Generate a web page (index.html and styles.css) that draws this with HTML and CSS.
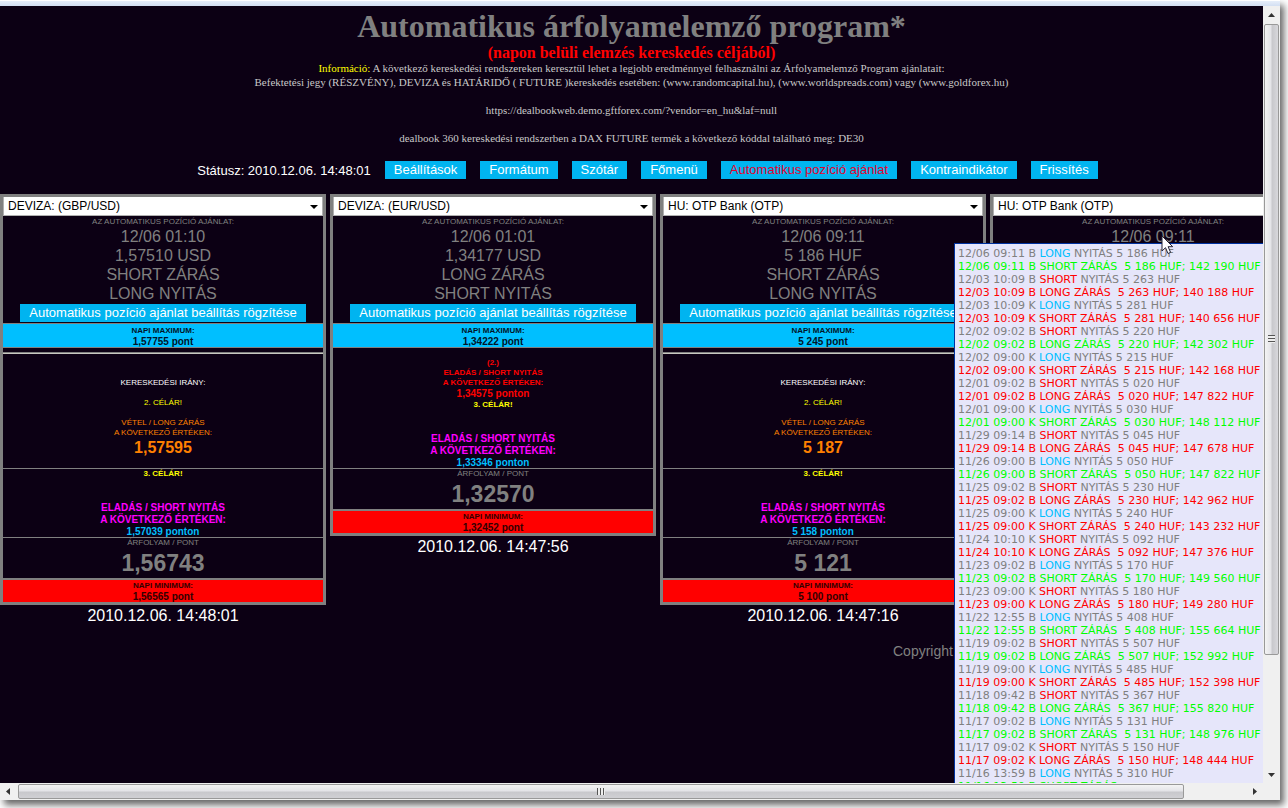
FILE: index.html
```html
<!DOCTYPE html>
<html lang="hu">
<head>
<meta charset="utf-8">
<title>Automatikus árfolyamelemző program</title>
<link rel="stylesheet" href="styles.css">
</head>
<body>
<div class="window">
  <div class="topstrip"></div>
  <div class="middle">
    <div class="viewport">
      <header class="header">
        <h1 class="title">Automatikus árfolyamelemző program*</h1>
        <p class="subtitle">(napon belüli elemzés kereskedés céljából)</p>
        <p class="info"><span class="yellow">Információ:</span> A következő kereskedési rendszereken keresztül lehet a legjobb eredménnyel felhasználni az Árfolyamelemző Program ajánlatait:<br>
        Befektetési jegy (RÉSZVÉNY), DEVIZA és HATÁRIDŐ ( FUTURE )kereskedés esetében: (www.randomcapital.hu), (www.worldspreads.com) vagy (www.goldforex.hu)<br><br>
        https://dealbookweb.demo.gftforex.com/?vendor=en_hu&amp;laf=null<br><br>
        dealbook 360 kereskedési rendszerben a DAX FUTURE termék a következő kóddal található meg: DE30</p>
      </header>
      <nav class="nav">
        <span class="status">Státusz: 2010.12.06. 14:48:01</span>
        <button class="btn">Beállítások</button>
        <button class="btn">Formátum</button>
        <button class="btn">Szótár</button>
        <button class="btn">Főmenü</button>
        <button class="btn btn-active">Automatikus pozíció ajánlat</button>
        <button class="btn">Kontraindikátor</button>
        <button class="btn">Frissítés</button>
      </nav>
      <main class="cards">
        <div class="column">
          <section class="card">
            <div class="picker"><select class="select" aria-label="DEVIZA: (GBP/USD)"><option>DEVIZA: (GBP/USD)</option></select><svg class="caret" width="8" height="4" viewBox="0 0 8 4"><path d="M0 0h8L4 4z"/></svg></div>
            <div class="offer">
              <p class="tiny">AZ AUTOMATIKUS POZÍCIÓ AJÁNLAT:</p>
              <p class="line">12/06 01:10</p><p class="line">1,57510 USD</p><p class="line">SHORT ZÁRÁS</p><p class="line">LONG NYITÁS</p>
              <button class="btn">Automatikus pozíció ajánlat beállítás rögzítése</button>
            </div>
            <div class="band max"><p>NAPI MAXIMUM:</p><p class="points">1,57755 pont</p></div>
            <hr class="rule">
            <div class="direction">
              <p class="white">KERESKEDÉSI IRÁNY:</p>
              <p class="yellow">2. CÉLÁR!</p>
              <div class="orange"><p>VÉTEL / LONG ZÁRÁS</p><p>A KÖVETKEZŐ ÉRTÉKEN:</p><p class="price">1,57595</p></div>
            </div>
            <div class="target"><p class="goal">3. CÉLÁR!</p><div class="sell"><p>ELADÁS / SHORT NYITÁS</p><p>A KÖVETKEZŐ ÉRTÉKEN:</p><p class="blue">1,57039 ponton</p></div></div>
            <div class="rate"><p>ÁRFOLYAM / PONT</p><p class="big">1,56743</p></div>
            <div class="band min"><p>NAPI MINIMUM:</p><p class="points">1,56565 pont</p></div>
          </section>
          <p class="stamp">2010.12.06. 14:48:01</p>
        </div>
        <div class="column">
          <section class="card">
            <div class="picker"><select class="select" aria-label="DEVIZA: (EUR/USD)"><option>DEVIZA: (EUR/USD)</option></select><svg class="caret" width="8" height="4" viewBox="0 0 8 4"><path d="M0 0h8L4 4z"/></svg></div>
            <div class="offer">
              <p class="tiny">AZ AUTOMATIKUS POZÍCIÓ AJÁNLAT:</p>
              <p class="line">12/06 01:01</p><p class="line">1,34177 USD</p><p class="line">LONG ZÁRÁS</p><p class="line">SHORT NYITÁS</p>
              <button class="btn">Automatikus pozíció ajánlat beállítás rögzítése</button>
            </div>
            <div class="band max"><p>NAPI MAXIMUM:</p><p class="points">1,34222 pont</p></div>
            <div class="second"><p>(2.)</p><p>ELADÁS / SHORT NYITÁS</p><p>A KÖVETKEZŐ ÉRTÉKEN:</p><p class="points">1,34575 ponton</p></div>
            <div class="target target-plain"><p class="goal">3. CÉLÁR!</p><div class="sell"><p>ELADÁS / SHORT NYITÁS</p><p>A KÖVETKEZŐ ÉRTÉKEN:</p><p class="blue">1,33346 ponton</p></div></div>
            <div class="rate"><p>ÁRFOLYAM / PONT</p><p class="big">1,32570</p></div>
            <div class="band min"><p>NAPI MINIMUM:</p><p class="points">1,32452 pont</p></div>
          </section>
          <p class="stamp">2010.12.06. 14:47:56</p>
        </div>
        <div class="column">
          <section class="card">
            <div class="picker"><select class="select" aria-label="HU: OTP Bank (OTP)"><option>HU: OTP Bank (OTP)</option></select><svg class="caret" width="8" height="4" viewBox="0 0 8 4"><path d="M0 0h8L4 4z"/></svg></div>
            <div class="offer">
              <p class="tiny">AZ AUTOMATIKUS POZÍCIÓ AJÁNLAT:</p>
              <p class="line">12/06 09:11</p><p class="line">5 186 HUF</p><p class="line">SHORT ZÁRÁS</p><p class="line">LONG NYITÁS</p>
              <button class="btn">Automatikus pozíció ajánlat beállítás rögzítése</button>
            </div>
            <div class="band max"><p>NAPI MAXIMUM:</p><p class="points">5 245 pont</p></div>
            <hr class="rule">
            <div class="direction">
              <p class="white">KERESKEDÉSI IRÁNY:</p>
              <p class="yellow">2. CÉLÁR!</p>
              <div class="orange"><p>VÉTEL / LONG ZÁRÁS</p><p>A KÖVETKEZŐ ÉRTÉKEN:</p><p class="price">5 187</p></div>
            </div>
            <div class="target"><p class="goal">3. CÉLÁR!</p><div class="sell"><p>ELADÁS / SHORT NYITÁS</p><p>A KÖVETKEZŐ ÉRTÉKEN:</p><p class="blue">5 158 ponton</p></div></div>
            <div class="rate"><p>ÁRFOLYAM / PONT</p><p class="big">5 121</p></div>
            <div class="band min"><p>NAPI MINIMUM:</p><p class="points">5 100 pont</p></div>
          </section>
          <p class="stamp">2010.12.06. 14:47:16</p>
        </div>
        <div class="column">
          <section class="card">
            <div class="picker"><select class="select" aria-label="HU: OTP Bank (OTP)"><option>HU: OTP Bank (OTP)</option></select></div>
            <div class="offer">
              <p class="tiny">AZ AUTOMATIKUS POZÍCIÓ AJÁNLAT:</p>
              <p class="line">12/06 09:11</p>
            </div>
          </section>
        </div>
      </main>
      <footer class="footer">Copyright I</footer>
      <div class="popup" id="popup"></div>
      <svg class="pointer" width="13" height="20" viewBox="0 0 13 20"><path d="M1 1v15l3.500-3.300 2.500 5.800 2.600-1.100-2.500-5.700h4.600z" fill="#fff" stroke="#223" stroke-width="1"/></svg>
    </div>
    <div class="vbar">
      <svg class="arrow" width="7" height="4" viewBox="0 0 7 4"><path d="M0 4h7L3.500 0z"/></svg>
      <div class="vtrack"><div class="vthumb"><span class="vgrip"></span></div></div>
      <svg class="arrow" width="7" height="4" viewBox="0 0 7 4"><path d="M0 0h7L3.500 4z"/></svg>
    </div>
  </div>
  <div class="hbar">
    <svg class="arrow" width="4" height="7" viewBox="0 0 4 7"><path d="M4 0v7L0 3.500z"/></svg>
    <div class="htrack"><div class="hthumb"><span class="hgrip"></span></div></div>
    <svg class="arrow" width="4" height="7" viewBox="0 0 4 7"><path d="M0 0v7l4-3.500z"/></svg>
  </div>
</div>
<script src="script.js"></script>
</body>
</html>
```
FILE: styles.css
```css
* { box-sizing: border-box; }
body {
  margin: 0;
  height: 100vh;
  padding: 0 8px 8px 0;
  background: #fff;
  font-family: "Liberation Sans", Arial, sans-serif;
  overflow: hidden;
}
p, h1 { margin: 0; }
.window {
  height: 100%;
  display: flex;
  flex-direction: column;
  box-shadow: 4px 5px 7px rgba(0, 0, 0, .6);
}
.topstrip { height: 6px; flex: none; background: linear-gradient(#fff 0 1px, #e6eefa 1px, #d3dff2); }
.middle { flex: 1; min-height: 0; display: flex; }
.viewport {
  flex: 1;
  min-width: 0;
  position: relative;
  overflow: hidden;
  background: #0c0014;
  color: #808080;
}
.header { padding-top: 2px; text-align: center; font-family: "Liberation Serif", "Times New Roman", serif; }
.title { font-size: 32px; line-height: 36px; }
.subtitle { font-size: 16px; font-weight: bold; line-height: 17px; color: #f00; }
.info { font-size: 11px; line-height: 14px; color: #c8c8c8; }
.yellow { color: #ff0; }
.white { color: #fff; }
.blue { color: #00bfff; }
.nav { display: flex; justify-content: center; align-items: center; gap: 14px; padding: 16px 0 15px 32px; }
.status { color: #fff; font-size: 13px; }
.btn {
  height: 18px;
  border: 0;
  padding: 0 9px;
  background: #00b4f0;
  color: #fff;
  font: 13px/18px "Liberation Sans", Arial, sans-serif;
  white-space: nowrap;
}
.btn-active { color: #e6002d; }
.cards { display: flex; align-items: flex-start; gap: 4px; }
.column { flex: none; width: 326px; text-align: center; }
.card { border: 3px solid #808080; font-size: 8px; line-height: 10px; }
.picker { display: grid; align-items: center; background: #fff; }
.picker > * { grid-area: 1 / 1; }
.select {
  appearance: none;
  width: 100%;
  height: 19px;
  padding: 0 4px;
  border: 1px solid #b0b0b0;
  border-top: 0;
  border-radius: 0;
  background: #fff;
  color: #000;
  font: 12px "Liberation Sans", Arial, sans-serif;
}
.caret { justify-self: end; margin-right: 5px; pointer-events: none; }
.offer { padding-bottom: 1px; }
.tiny { line-height: 11px; }
.line { font-size: 16px; line-height: 19px; }
.offer .btn { display: block; margin: 1px auto 0; }
.band { font-weight: bold; line-height: 11px; }
.max { padding-top: 1px; background: #00bfff; color: #001428; border: solid #808080; border-width: 1px 0; }
.min { background: #f00; color: #300; border-top: 2px solid #808080; }
.points { font-size: 10px; line-height: 11px; }
.rule { margin: 4px 0 0; border: solid; border-width: 1px 0; border-color: #808080 #000 #c8c8c0; }
.direction { display: grid; gap: 10px; padding: 24px 0 10px; }
.orange { color: #ff8000; }
.price { font-size: 16px; font-weight: bold; line-height: 20px; }
.second { padding: 10px 0 1px; color: #f00; font-weight: bold; }
.target { border-top: 1px solid #808080; font-weight: bold; }
.target-plain { border-top: 0; }
.goal { color: #ff0; }
.sell { padding-top: 23px; color: #f0f; font-size: 10px; line-height: 12px; }
.sell .blue { line-height: 11px; }
.rate { border-top: 1px solid #808080; }
.big { font-size: 23px; font-weight: bold; line-height: 30px; }
.stamp { padding-top: 2px; color: #fff; font-size: 16px; line-height: 18px; }
.footer { padding: 18px 0 0 893px; font-size: 14px; line-height: 16px; white-space: nowrap; }
.popup {
  position: absolute;
  left: 954px;
  top: 237px;
  right: 0;
  bottom: 0;
  overflow: hidden;
  padding: 3px;
  border-left: 1px solid #0032a0;
  border-top: 1px solid #0032a0;
  background: #e6e6fa;
  font: 11px/13px Verdana, "DejaVu Sans", sans-serif;
  white-space: pre;
}
.gain { color: #0f0; }
.loss { color: #f00; }
.pointer { position: absolute; left: 1161px; top: 229px; }
.arrow { flex: none; fill: #333; }
.vbar { flex: none; width: 17px; display: flex; flex-direction: column; align-items: center; gap: 7px; padding: 7px 0 6px; background: #f0f0f0; }
.vtrack { flex: 1; width: 100%; padding: 0 1px; }
.vthumb { height: 85%; display: grid; place-items: center; border: 1px solid #999; border-radius: 2px; background: linear-gradient(90deg, #f4f4f4, #e4e4e8 45%, #c8c8cc 55%, #d8d8dc); }
.vgrip { width: 7px; height: 8px; background: repeating-linear-gradient(#555 0 1px, #eee 1px 3px); }
.hbar { flex: none; height: 17px; display: flex; align-items: center; gap: 8px; padding: 0 23px 0 6px; background: #f0f0f0; }
.htrack { flex: 1; height: 100%; padding: 1px 0; }
.hthumb { width: 95%; height: 15px; display: grid; place-items: center; border: 1px solid #999; border-radius: 2px; background: linear-gradient(#f4f4f4, #e4e4e8 45%, #c8c8cc 55%, #d0d0d4); }
.hgrip { width: 8px; height: 7px; background: repeating-linear-gradient(90deg, #555 0 1px, #eee 1px 3px); }
```
FILE: script.js
```js
// date, kind, opened side, price, running balance, result of the close
const trades = [
  ["12/06 09:11", "B", "LONG", "5 186", "142 190", "gain"],
  ["12/03 10:09", "B", "SHORT", "5 263", "140 188", "loss"],
  ["12/03 10:09", "K", "LONG", "5 281", "140 656", "loss"],
  ["12/02 09:02", "B", "SHORT", "5 220", "142 302", "gain"],
  ["12/02 09:00", "K", "LONG", "5 215", "142 168", "loss"],
  ["12/01 09:02", "B", "SHORT", "5 020", "147 822", "loss"],
  ["12/01 09:00", "K", "LONG", "5 030", "148 112", "gain"],
  ["11/29 09:14", "B", "SHORT", "5 045", "147 678", "loss"],
  ["11/26 09:00", "B", "LONG", "5 050", "147 822", "gain"],
  ["11/25 09:02", "B", "SHORT", "5 230", "142 962", "loss"],
  ["11/25 09:00", "K", "LONG", "5 240", "143 232", "loss"],
  ["11/24 10:10", "K", "SHORT", "5 092", "147 376", "loss"],
  ["11/23 09:02", "B", "LONG", "5 170", "149 560", "gain"],
  ["11/23 09:00", "K", "SHORT", "5 180", "149 280", "loss"],
  ["11/22 12:55", "B", "LONG", "5 408", "155 664", "gain"],
  ["11/19 09:02", "B", "SHORT", "5 507", "152 992", "gain"],
  ["11/19 09:00", "K", "LONG", "5 485", "152 398", "loss"],
  ["11/18 09:42", "B", "SHORT", "5 367", "155 820", "gain"],
  ["11/17 09:02", "B", "LONG", "5 131", "148 976", "gain"],
  ["11/17 09:02", "K", "SHORT", "5 150", "148 444", "loss"],
  ["11/16 13:59", "B", "LONG", "5 310", "", "gain"]
];
document.getElementById("popup").innerHTML = trades.map(([date, kind, side, price, sum, result]) => {
  const closed = side === "LONG" ? "SHORT" : "LONG";
  const tone = side === "LONG" ? "blue" : "loss";
  const tail = sum ? `  ${price} HUF; ${sum} HUF` : "";
  return `<div>${date} ${kind} <span class="${tone}">${side}</span> NYITÁS ${price} HUF</div>` +
    `<div class="${result}">${date} ${kind} ${closed} ZÁRÁS${tail}</div>`;
}).join("");
```
